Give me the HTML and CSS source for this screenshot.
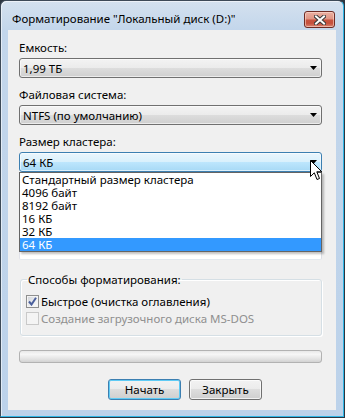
FILE: index.html
```html
<!DOCTYPE html>
<html lang="ru">
<head>
<meta charset="utf-8">
<title>Форматирование</title>
<link rel="stylesheet" href="styles.css">
</head>
<body>
<div class="window">
  <div class="titlebar">
    <span class="title">Форматирование "Локальный диск (D:)"</span>
    <button class="close" aria-label="Закрыть">
      <svg width="12" height="10" viewBox="0 0 12 10">
        <path d="M2 1.5 L10 8.5 M10 1.5 L2 8.5" stroke="#3a3a3a" stroke-width="4" stroke-linecap="square"/>
        <path d="M2 1.5 L10 8.5 M10 1.5 L2 8.5" stroke="#ffffff" stroke-width="2" stroke-linecap="square"/>
      </svg>
    </button>
  </div>
  <div class="client">
    <div class="label first">Емкость:</div>
    <div class="combo"><span>1,99 ТБ</span><svg class="arrow" width="7" height="4" viewBox="0 0 7 4"><polygon points="0,0 7,0 3.5,4" fill="#000"/></svg></div>
    <div class="label">Файловая система:</div>
    <div class="combo"><span>NTFS (по умолчанию)</span><svg class="arrow" width="7" height="4" viewBox="0 0 7 4"><polygon points="0,0 7,0 3.5,4" fill="#000"/></svg></div>
    <div class="label">Размер кластера:</div>
    <div class="combo-wrap">
      <div class="combo hot"><span>64 КБ</span><svg class="arrow" width="7" height="4" viewBox="0 0 7 4"><polygon points="0,0 7,0 3.5,4" fill="#000"/></svg></div>
      <ul class="dropdown">
        <li>Стандартный размер кластера</li>
        <li>4096 байт</li>
        <li>8192 байт</li>
        <li>16 КБ</li>
        <li>32 КБ</li>
        <li class="selected">64 КБ</li>
      </ul>
      <svg class="cursor" width="13" height="21" viewBox="0 0 13 21">
        <path d="M0.5 0.5 L0.5 16.5 L4.3 12.8 L7 19.5 L9.5 18.5 L6.8 11.8 L11.8 11.8 Z" fill="#fff" stroke="#000" stroke-width="1" stroke-linejoin="miter"/>
      </svg>
    </div>
    <div class="textbox"></div>
    <fieldset class="group">
      <legend>Способы форматирования:</legend>
      <div class="check">
        <span class="box checked">
          <svg width="9" height="9" viewBox="0 0 9 9"><path d="M1 4.5 L3.5 7.5 L8 0.8" fill="none" stroke="#4a5f9c" stroke-width="2"/></svg>
        </span>
        <span>Быстрое (очистка оглавления)</span>
      </div>
      <div class="check disabled">
        <span class="box"></span>
        <span>Создание загрузочного диска MS-DOS</span>
      </div>
    </fieldset>
    <div class="progress"></div>
    <div class="buttons">
      <button class="btn default">Начать</button>
      <button class="btn">Закрыть</button>
    </div>
  </div>
</div>
</body>
</html>
```
FILE: styles.css
```css
* { box-sizing: border-box; }
html, body { margin: 0; padding: 0; }
body {
  width: 345px;
  height: 418px;
  overflow: hidden;
  background: #2c3540;
  font-family: "Noto Sans", "DejaVu Sans", sans-serif;
  font-size: 11.5px;
  color: #000;
}
.window {
  width: 344px;
  height: 417px;
  border: 1px solid #3d4a58;
  border-right-color: #2fb6e6;
  border-bottom-color: #2fb6e6;
  border-radius: 6px 6px 0 0;
  background: linear-gradient(#d4e1ef 0, #c3d6eb 29px, #bcd2ea 100%);
  box-shadow: inset 1px 1px 0 rgba(255,255,255,0.55);
  padding: 0 7px 6px 7px;
  display: flex;
  flex-direction: column;
}
.titlebar {
  height: 29px;
  display: flex;
  align-items: flex-start;
  justify-content: space-between;
}
.title {
  margin-top: 10px;
  padding-left: 4px;
  line-height: 15px;
  white-space: nowrap;
}
.close {
  margin-top: 10px;
  margin-right: 1px;
  width: 31px;
  height: 17px;
  padding: 0;
  border: 1px solid #6e2b24;
  border-radius: 3px;
  background: linear-gradient(#eab0a2 0%, #df9483 48%, #c8533f 52%, #c5503c 75%, #d88371 100%);
  box-shadow: inset 0 0 0 1px rgba(255,225,215,0.55);
  display: flex;
  align-items: center;
  justify-content: center;
}
.close svg { display: block; }
.client {
  flex: 1;
  background: #f0f0f0;
  padding: 10px 14px 0 11px;
  display: flex;
  flex-direction: column;
  align-items: flex-start;
}
.label {
  line-height: 15px;
  height: 15px;
  margin-top: 9px;
  margin-bottom: 3px;
  white-space: nowrap;
}
.label.first { margin-top: 0; }
.combo {
  width: 303px;
  height: 20px;
  border: 1px solid #707070;
  border-radius: 3px;
  background: linear-gradient(#f3f3f3 0%, #ebebeb 50%, #dddddd 50%, #cfcfcf 100%);
  box-shadow: inset 0 0 0 1px rgba(255,255,255,0.6);
  display: flex;
  align-items: center;
  justify-content: space-between;
  padding: 1px 4px 0 3px;
  line-height: 15px;
  white-space: nowrap;
}
.combo.hot {
  border-color: #3c7fb1;
  background: linear-gradient(#eaf6fd 0%, #d9f0fc 50%, #bee6fd 50%, #a7d9f5 100%);
}
.arrow { display: block; margin-top: -1px; }
.combo-wrap {
  position: relative;
  width: 303px;
}
.dropdown {
  position: absolute;
  top: 20px;
  left: 0;
  width: 303px;
  margin: 0;
  padding: 0;
  list-style: none;
  background: #fff;
  border: 1px solid #646464;
  box-shadow: 2px 2px 2px rgba(0,0,0,0.25);
  z-index: 2;
}
.dropdown li {
  height: 13px;
  line-height: 13px;
  padding-left: 2px;
  white-space: nowrap;
}
.dropdown li.selected {
  background: #3399ff;
  color: #fff;
}
.cursor {
  position: absolute;
  left: 291px;
  top: 8px;
  z-index: 3;
}
.textbox {
  width: 303px;
  height: 23px;
  margin-top: 65px;
  background: #fff;
  border: 1px solid;
  border-color: #abadb3 #dbdfe6 #e3e9ef #e2e3ea;
  border-radius: 2px;
}
.group {
  width: 302px;
  margin: 12px 0 0 1px;
  padding: 6px 5px 8px 5px;
  border: 1px solid #d5dfe5;
  border-radius: 3px;
  box-shadow: inset 1px 1px 0 #fff, 1px 1px 0 #fff;
  min-inline-size: 0;
}
.group legend {
  padding: 0 1px;
  margin-left: 1px;
  line-height: 15px;
  white-space: nowrap;
}
.check {
  height: 17px;
  display: flex;
  align-items: center;
  gap: 2px;
  white-space: nowrap;
}
.box {
  width: 13px;
  height: 13px;
  border: 1px solid #8e8f8f;
  background: linear-gradient(135deg, #cdd1d7 0%, #eef0f2 60%, #fafafa 100%);
  box-shadow: inset 0 0 0 1px #f4f4f4;
  display: flex;
  align-items: center;
  justify-content: center;
  flex: none;
}
.box svg { display: block; }
.check.disabled { color: #8f8f8f; }
.check.disabled .box {
  border-color: #c9c9c9;
  background: #f4f4f4;
  box-shadow: none;
}
.progress {
  width: 303px;
  height: 13px;
  margin-top: 14px;
  border: 1px solid #b2b2b2;
  border-radius: 3px;
  background: linear-gradient(#e8e8e8 0%, #f6f6f6 30%, #e4e4e4 70%, #d2d2d2 100%);
}
.buttons {
  margin-top: 16px;
  padding-left: 89px;
  display: flex;
  gap: 8px;
}
.btn {
  width: 73px;
  height: 21px;
  padding: 0;
  font-family: inherit;
  font-size: 11.5px;
  line-height: 15px;
  color: #000;
  border: 1px solid #707070;
  border-radius: 3px;
  background: linear-gradient(#f2f2f2 0%, #ebebeb 50%, #dddddd 50%, #cfcfcf 100%);
  box-shadow: inset 0 0 0 1px rgba(255,255,255,0.7);
}
.btn.default {
  border-color: #3c7fb1;
  box-shadow: inset 0 0 0 1px #5fcbf5;
}
```
